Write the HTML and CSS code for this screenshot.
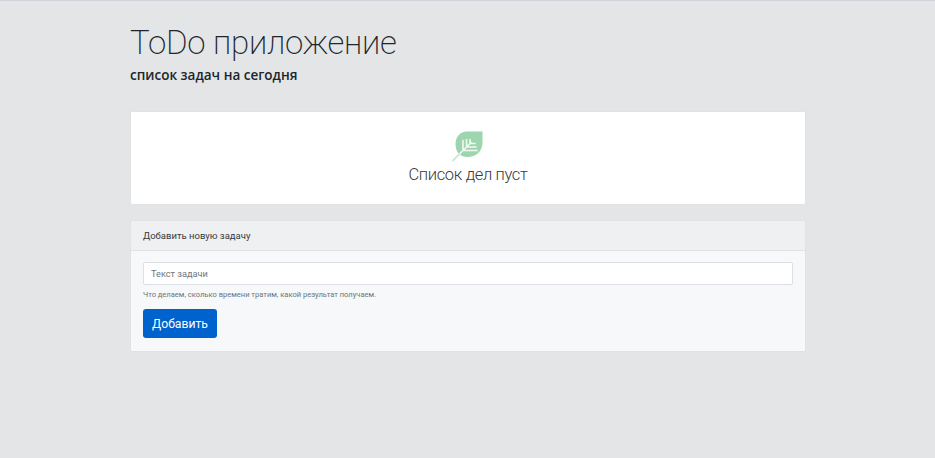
FILE: index.html
```html
<!DOCTYPE html>
<html lang="ru">
<head>
<meta charset="utf-8">
<title>ToDo приложение</title>
<link rel="stylesheet" href="styles.css">
</head>
<body>
<div class="topline"></div>
<main class="container">
  <header class="hero">
    <h1 class="title">ToDo приложение</h1>
    <h2 class="subtitle">список задач на сегодня</h2>
  </header>
  <section class="card empty">
    <svg class="leaf" viewBox="0 0 32 32" width="32" height="32" aria-hidden="true">
      <path fill="#9dd6ae" d="M30.500 1.500H15C8 1.500 3.500 7 3.500 14c0 3.800 1 7 3 9.500 2.500 2.500 5.500 3.500 9 3.500 8.500 0 15-5.500 15-14.500V1.500Z"/>
      <path fill="none" stroke="#cfe6d6" stroke-width="1.800" stroke-linecap="round" d="M1 30.500 8 23.500"/>
      <path fill="none" stroke="#f0f9f2" stroke-width="1.600" stroke-linecap="round" d="M8 23.500 19 12.500M11 20.500V10.500M14.500 17V9.500M18 13.500V9.500 M11 20.500H25M14.500 17H24M18 13.500H23"/>
    </svg>
    <h3 class="empty-text">Список дел пуст</h3>
  </section>
  <section class="card form-card">
    <div class="card-header">Добавить новую задачу</div>
    <div class="card-body">
      <input class="field" type="text" placeholder="Текст задачи">
      <small class="hint">Что делаем, сколько времени тратим, какой результат получаем.</small>
      <button class="btn" type="button">Добавить</button>
    </div>
  </section>
</main>
</body>
</html>
```
FILE: styles.css
```css
* { box-sizing: border-box; }
html, body { height: 100%; }
body {
  margin: 0;
  background: #e3e5e7;
  color: #212529;
  font-family: "Open Sans", "Noto Sans", sans-serif;
  overflow: hidden;
}
.topline { height: 1px; background: #ced4da; }
.container { width: 676px; margin-left: 130px; }
.hero { padding-top: 21px; height: 110px; }
.title {
  margin: 0;
  font-family: Roboto, sans-serif;
  font-size: 33px;
  font-weight: 200;
  letter-spacing: -0.250px;
  line-height: 42px;
  color: #212529;
}
.subtitle {
  margin: 1px 0 0;
  font-size: 13.500px;
  font-weight: 600;
  line-height: 20px;
}
.card {
  background: #fff;
  border: 1px solid #e0e2e5;
  border-radius: 2px;
}
.empty {
  height: 94px;
  padding-top: 18px;
  display: flex;
  flex-direction: column;
  align-items: center;
}
.leaf { display: block; }
.empty-text {
  margin: 1px 0 0;
  font-family: Roboto, sans-serif;
  font-size: 16.500px;
  font-weight: 300;
  letter-spacing: -0.350px;
  line-height: 24px;
  color: #343a40;
}
.form-card { margin-top: 15px; height: 132px; background: #f7f8fa; }
.card-header {
  height: 30px;
  padding: 0 12px;
  display: flex;
  align-items: center;
  font-family: Roboto, sans-serif;
  font-size: 9.500px;
  color: #343a40;
  background: #eff0f2;
  border-bottom: 1px solid #e0e2e5;
}
.card-body { padding: 11px 12px 12px; display: flex; flex-direction: column; align-items: flex-start; }
.field {
  width: 100%;
  height: 23px;
  padding: 0 7px;
  font-family: Roboto, sans-serif;
  font-size: 9.200px;
  background: #fff;
  border: 1px solid #dcdfe3;
  border-radius: 2px;
}
.field::placeholder { color: #6c757d; opacity: 1; }
.hint { margin-top: 4px; font-family: Roboto, sans-serif; font-size: 7.550px; line-height: 11px; color: #6c757d; }
.btn {
  margin-top: 9px;
  width: 74px;
  height: 29px;
  padding: 0;
  font-family: Roboto, sans-serif;
  font-size: 12.200px;
  color: #fff;
  background: #0062cc;
  border: 0;
  border-radius: 3px;
}
```
